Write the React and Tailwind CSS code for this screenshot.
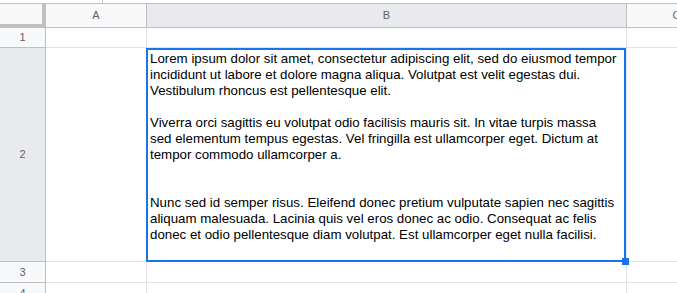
const lines = [
    'Lorem ipsum dolor sit amet, consectetur adipiscing elit, sed do eiusmod tempor',
    'incididunt ut labore et dolore magna aliqua. Volutpat est velit egestas dui.',
    'Vestibulum rhoncus est pellentesque elit.',
    '',
    'Viverra orci sagittis eu volutpat odio facilisis mauris sit. In vitae turpis massa',
    'sed elementum tempus egestas. Vel fringilla est ullamcorper eget. Dictum at',
    'tempor commodo ullamcorper a.',
    '',
    '',
    'Nunc sed id semper risus. Eleifend donec pretium vulputate sapien nec sagittis',
    'aliquam malesuada. Lacinia quis vel eros donec ac odio. Consequat ac felis',
    'donec et odio pellentesque diam volutpat. Est ullamcorper eget nulla facilisi.',
];

function RowHead({ n, active, h }) {
    return (
        <div className={`w-[46px] shrink-0 flex items-center justify-center border-r border-b border-[#c0c0c0] text-[11px] text-[#5f6368] ${active ? 'bg-[#e8eaed]' : 'bg-[#f8f9fa]'} ${h}`}>
            {n}
        </div>
    );
}

function Cell({ w, children, className = '' }) {
    return <div className={`shrink-0 border-r border-b border-[#e2e3e3] ${w} ${className}`}>{children}</div>;
}

export default function App() {
    return (
        <div className="w-[677px] h-[293px] overflow-hidden bg-white" style={{ fontFamily: '"Liberation Sans", Arial, sans-serif' }}>
            {/* strip above the column headers */}
            <div className="h-[4px] flex border-b border-[#c0c0c0]">
                <div className="ml-[102px] w-px h-[3px] bg-[#c8c8c8]" />
            </div>

            {/* column headers */}
            <div className="flex h-[24px] text-[11px] text-[#5f6368]">
                <div className="w-[46px] shrink-0 bg-[#f8f9fa] border-r-4 border-b-4 border-[#c0c0c0]" />
                <div className="w-[101px] shrink-0 flex items-center justify-center bg-[#f8f9fa] border-r border-b border-[#c0c0c0]">A</div>
                <div className="w-[480px] shrink-0 flex items-center justify-center bg-[#e8eaed] border-r border-b border-[#c0c0c0]">B</div>
                <div className="w-[100px] shrink-0 flex items-center justify-center bg-[#f8f9fa] border-r border-b border-[#c0c0c0]">C</div>
            </div>

            {/* row 1 */}
            <div className="flex h-[20px]">
                <RowHead n="1" h="h-[20px]" />
                <Cell w="w-[101px]" />
                <Cell w="w-[480px]" />
                <Cell w="w-[100px]" />
            </div>

            {/* row 2 */}
            <div className="flex h-[214px]">
                <RowHead n="2" active h="h-[214px]" />
                <Cell w="w-[101px]" />
                <Cell w="w-[480px]" className="relative pl-[3px] pt-[3px] text-[13.3px] leading-[16px] text-black">
                    {lines.map((l, i) => (
                        <div key={i} className="h-[16px] whitespace-nowrap">{l}</div>
                    ))}
                    <div className="absolute -left-px top-0 right-0 -bottom-px border-2 border-[#1a73e8] pointer-events-none">
                        <div className="absolute -right-[5px] -bottom-[5px] w-[7px] h-[7px] bg-[#1a73e8]" />
                    </div>
                </Cell>
                <Cell w="w-[100px]" />
            </div>

            {/* row 3 */}
            <div className="flex h-[21px]">
                <RowHead n="3" h="h-[21px]" />
                <Cell w="w-[101px]" />
                <Cell w="w-[480px]" />
                <Cell w="w-[100px]" />
            </div>

            {/* row 4 */}
            <div className="flex h-[21px]">
                <RowHead n="4" h="h-[21px]" />
                <Cell w="w-[101px]" />
                <Cell w="w-[480px]" />
                <Cell w="w-[100px]" />
            </div>
        </div>
    );
}
